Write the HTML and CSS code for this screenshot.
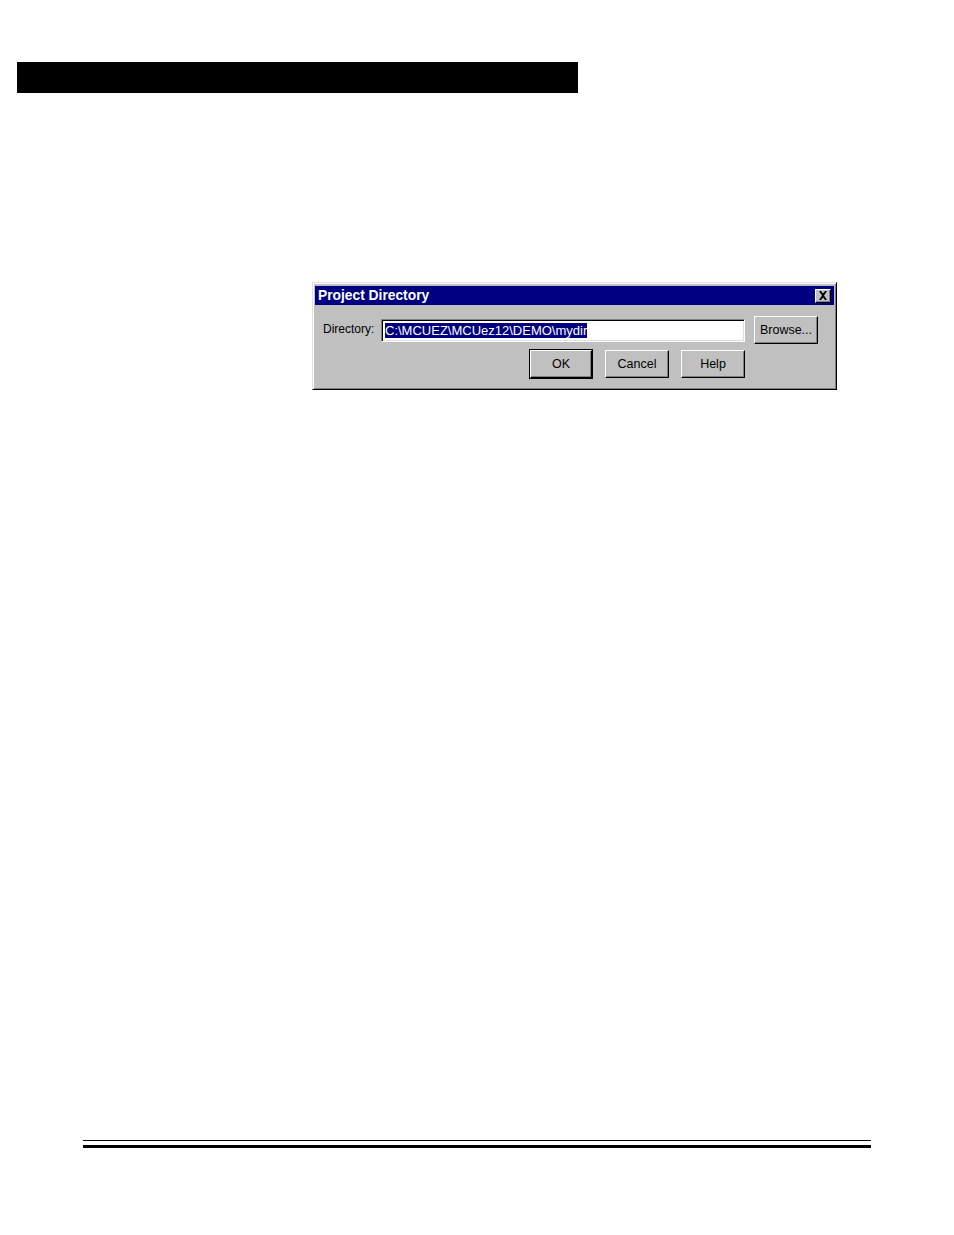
FILE: index.html
```html
<!DOCTYPE html>
<html>
<head>
<meta charset="utf-8">
<link rel="stylesheet" href="styles.css">
</head>
<body>
<div class="page">
  <div class="header-bar"></div>
  <div class="dialog">
    <div class="titlebar">
      <span class="title">Project Directory</span>
      <span class="close-btn"><svg width="10" height="9" viewBox="0 0 10 9"><path d="M1 0h2l2 2.5L7 0h2L6 4.5 9 9H7L5 6.5 3 9H1l3-4.5z" fill="#000"/></svg></span>
    </div>
    <div class="body">
      <div class="row1">
        <span class="label">Directory:</span>
        <span class="input"><span class="sel">C:\MCUEZ\MCUez12\DEMO\mydir</span></span>
        <span class="btn browse">Browse...</span>
      </div>
      <div class="row2">
        <span class="btn default"><span class="inner">OK</span></span>
        <span class="btn">Cancel</span>
        <span class="btn">Help</span>
      </div>
    </div>
  </div>
  <div class="footer">
    <div class="thin"></div>
    <div class="thick"></div>
  </div>
</div>
</body>
</html>
```
FILE: styles.css
```css
html, body { margin: 0; padding: 0; background: #fff; }
.page {
  width: 954px; height: 1235px; box-sizing: border-box; padding-top: 62px;
  font-family: "Liberation Sans", Arial, sans-serif;
}
.header-bar { margin-left: 17px; width: 561px; height: 31px; background: #000; }
.dialog {
  margin: 189px 0 0 312px;
  width: 525px; height: 108px; box-sizing: border-box;
  background: #c0c0c0;
  border-top: 1px solid #dfdfdf; border-left: 1px solid #dfdfdf;
  border-right: 1px solid #000; border-bottom: 1px solid #000;
  box-shadow: inset 1px 1px 0 #fff, inset -1px -1px 0 #808080;
  padding: 3px 2px 2px 2px;
}
.titlebar {
  height: 19px; background: #000080; display: flex; align-items: center; justify-content: space-between;
  padding: 0 3px 0 3px;
}
.title { color: #fff; font-weight: bold; font-size: 13.8px; }
.close-btn {
  width: 16px; height: 14px; box-sizing: border-box; background: #c0c0c0;
  border-top: 1px solid #fff; border-left: 1px solid #fff; border-right: 1px solid #000; border-bottom: 1px solid #000;
  box-shadow: inset -1px -1px 0 #808080; display: flex; align-items: center; justify-content: center;
}
.body { padding: 11px 0 0 8px; }
.row1 { display: flex; align-items: center; height: 28px; }
.label { font-size: 12px; color: #000; width: 58px; margin-top: -3px; }
.input {
  width: 364px; height: 23px; box-sizing: border-box; background: #fff;
  border-top: 1px solid #808080; border-left: 1px solid #808080; border-right: 1px solid #fff; border-bottom: 1px solid #fff;
  box-shadow: inset 1px 1px 0 #000, inset -1px -1px 0 #dfdfdf;
  padding: 3px 0 0 3px; font-size: 13px; line-height: 15px;
}
.sel { background: #000080; color: #fff; white-space: nowrap; }
.btn {
  width: 64px; height: 28px; box-sizing: border-box; background: #c0c0c0;
  border-top: 1px solid #fff; border-left: 1px solid #fff; border-right: 1px solid #000; border-bottom: 1px solid #000;
  box-shadow: inset -1px -1px 0 #808080; display: flex; align-items: center; justify-content: center;
  font-size: 12.5px; color: #000;
}
.browse { margin-left: 9px; }
.row2 { display: flex; gap: 12px; padding-left: 206px; margin-top: 5px; align-items: center; }
.btn.default { border: 1px solid #000; box-shadow: none; height: 30px; padding: 0; }
.btn.default .inner {
  width: 100%; height: 100%; box-sizing: border-box; display: flex; align-items: center; justify-content: center;
  border-top: 1px solid #fff; border-left: 1px solid #fff; border-right: 1px solid #000; border-bottom: 1px solid #000;
  box-shadow: inset -1px -1px 0 #808080;
}
.footer { margin: 750px 0 0 83px; width: 788px; }
.thin { height: 1px; background: #000; }
.thick { height: 3px; background: #000; margin-top: 4px; }
```
